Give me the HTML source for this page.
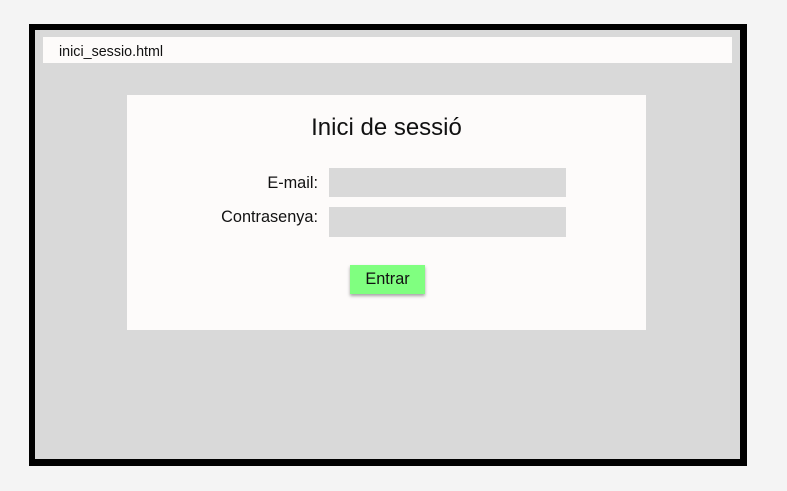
<!DOCTYPE html>
<html><head><style>
html,body{margin:0;padding:0;width:787px;height:491px;background:#f4f4f4;overflow:hidden;font-family:"Liberation Sans",sans-serif;color:#111}
.frame{position:absolute;left:29px;top:24px;width:705px;height:429px;border:6px solid #000;border-right-width:7px;border-bottom-width:7px;background:#d9d9d9}
.bar{position:absolute;left:43px;top:37px;width:689px;height:26px;background:#fdfbfa;font-size:14.3px;line-height:26px;}
.bar span{position:absolute;left:16px;top:2px}
.panel{position:absolute;left:127px;top:95px;width:519px;height:235px;background:#fdfbfa}
.title{position:absolute;width:519px;top:114px;text-align:center;font-size:24px}
.lbl{position:absolute;font-size:16.3px;text-align:right;width:140px;left:178px}
.inp{position:absolute;left:329px;width:237px;background:#d9d9d9}
.btn{position:absolute;left:350px;top:265px;width:75px;height:29px;background:#80ff80;box-shadow:0 2px 3px rgba(0,0,0,.35);font-size:16.3px;text-align:center;line-height:29px}
</style></head><body>
<div class="frame"></div>
<div class="bar"><span>inici_sessio.html</span></div>
<div class="panel"></div>
<div class="title" style="left:127px">Inici de sessió</div>
<div class="lbl" style="top:174px">E-mail:</div>
<div class="lbl" style="top:208px">Contrasenya:</div>
<div class="inp" style="top:168px;height:29px"></div>
<div class="inp" style="top:207px;height:30px"></div>
<div class="btn">Entrar</div>
</body></html>
